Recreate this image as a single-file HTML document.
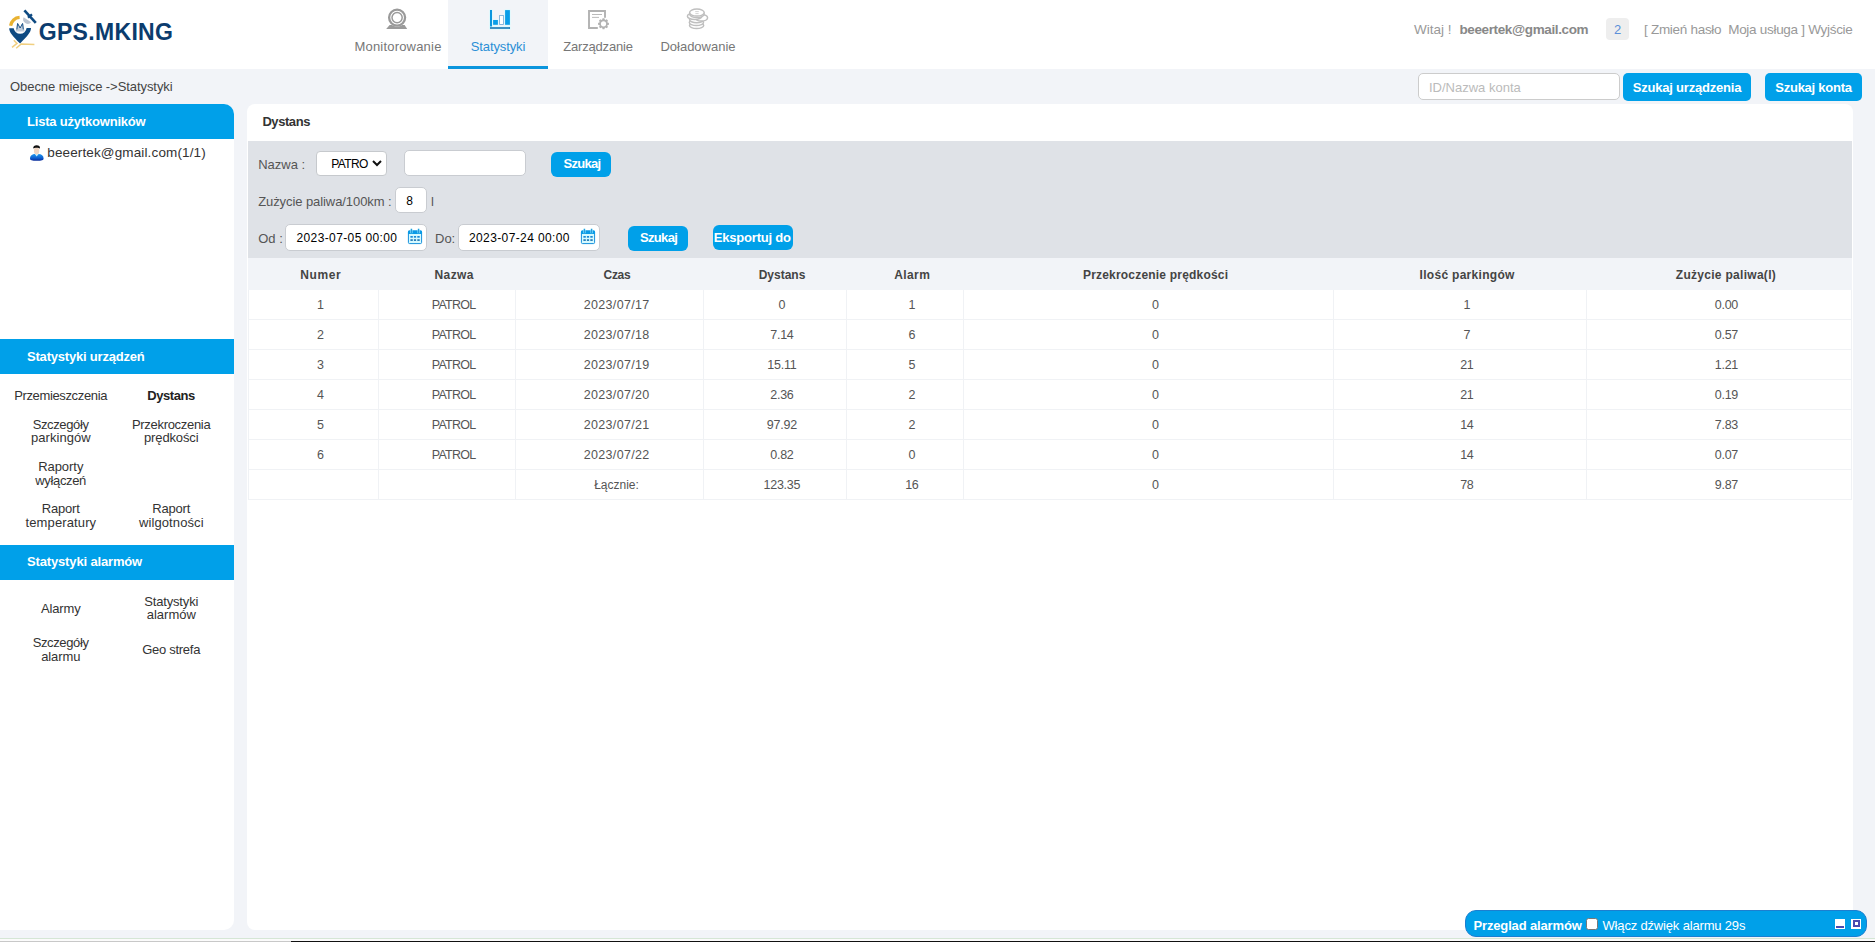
<!DOCTYPE html>
<html lang="pl">
<head>
<meta charset="utf-8">
<title>GPS.MKING - Statystyki</title>
<style>
*{box-sizing:border-box;margin:0;padding:0}
html,body{width:1875px;height:942px;overflow:hidden}
body{position:relative;background:#f2f4f8;font-family:"Liberation Sans",sans-serif;font-size:13px;color:#333}
.a{position:absolute;white-space:nowrap}
.c{position:absolute;white-space:nowrap;text-align:center}
/* header */
#hdr{position:absolute;left:0;top:0;width:1875px;height:69px;background:#fff}
#logotxt{left:38.7px;top:19.3px;font-size:23px;line-height:27px;font-weight:700;color:#0b3c6e;letter-spacing:0.33px}
.tab{position:absolute;top:0;width:100px;height:69px}
.tab.on{background:#f2f4f8;border-bottom:3px solid #0b95dd}
.tabl{top:39px;width:100px;font-size:13px;line-height:16px;color:#777}
.tab.on .tabl{color:#2b8fd6}
.hr{top:21.7px;line-height:16px;font-size:13.5px;color:#999}
/* sub bar */
#crumb{left:10px;top:79px;line-height:16px;color:#444;letter-spacing:-0.065px}
.btn{position:absolute;background:#00a0e9;color:#fff;font-weight:700;text-align:center;border-radius:5px;white-space:nowrap}
/* panels */
#side{position:absolute;left:0;top:104px;width:234px;height:826px;background:#fff;border-radius:0 10px 10px 0;overflow:hidden}
.sh{position:absolute;left:0;width:234px;height:35px;background:#00a0e9}
.sht{left:27px;top:9.7px;line-height:16px;color:#fff;font-weight:700;letter-spacing:-0.2px}
.mi{width:120px;line-height:14px;font-size:13px;color:#333}
#main{position:absolute;left:247px;top:104px;width:1606px;height:826px;background:#fff;border-radius:8px}
#filt{position:absolute;left:1px;top:37px;width:1604px;height:117px;background:#dfe2e7}
.fl{line-height:16px;color:#555}
.inp{position:absolute;background:#fff;border:1px solid #c9ccd1;border-radius:5px}
/* table */
#th{position:absolute;left:1px;top:154px;width:1604px;height:32px;background:#f2f4f8}
.hc{line-height:16px;font-size:12px;font-weight:700;color:#444}
.row{position:absolute;left:1px;width:1604px;height:30px;border-bottom:1px solid #f0f2f5}
.td{line-height:16px;font-size:12.5px;color:#555}
.vl{position:absolute;top:186px;width:1px;height:210px;background:#f0f2f5}
</style>
</head>
<body>
<div id="hdr"></div>
<div class="a" id="logotxt">GPS.MKING</div>


<div class="tab" style="left:348px"><div class="c tabl" id="t1" style="letter-spacing:0.2px">Monitorowanie</div></div>
<div class="tab on" style="left:448px"><div class="c tabl" id="t2" style="letter-spacing:-0.12px">Statystyki</div></div>
<div class="tab" style="left:548px"><div class="c tabl" id="t3" style="letter-spacing:-0.18px">Zarządzanie</div></div>
<div class="tab" style="left:648px"><div class="c tabl" id="t4">Doładowanie</div></div>

<!-- logo icon -->
<svg class="a" id="logo" style="left:6px;top:6px" width="34" height="46" viewBox="6 6 34 46">
  <path d="M10.6 25.8 A9.6 9.6 0 0 1 19.6 17.4" fill="none" stroke="#e9b232" stroke-width="3.2"/>
  <path d="M9.2 28.2 L13.7 28.2 A6.5 6.5 0 0 0 26.6 28.1 L31 28 C31 32.4 27.4 35.8 20.1 43.6 C12.6 35.8 9.2 32.4 9.2 28.2Z" fill="#0e4a82"/>
  <path d="M15.6 31.6 L17 24 L18.6 24 L20.1 27.6 L21.6 24 L23.2 24 L24.6 31.6Z" fill="#c3cedc"/>
  <path d="M16.9 29.4 L17.6 23.4 L20.1 28 L22.6 23.4 L23.3 29.4" fill="none" stroke="#0e4a82" stroke-width="0.9"/>
  <path d="M23.6 17.2 A4.6 4.6 0 0 0 31.2 22.2 Z" fill="#bcc5d2"/>
  <path d="M24.4 10.4 L35.8 22.8" fill="none" stroke="#0e4a82" stroke-width="2.6"/>
  <path d="M28 17.6 L32 14.4" fill="none" stroke="#0e4a82" stroke-width="2.4"/>
  <path d="M13.8 40.2 L17 43.4 L12 47.4 M16.2 48.2 L21.2 44 L34.4 44.4" fill="none" stroke="#f0cf80" stroke-width="1.5"/>
</svg>

<!-- monitor icon -->
<svg class="a" id="ic1" style="left:385px;top:7px" width="24" height="23" viewBox="385 7 24 23">
  <path d="M386.2 28.9 L389.6 24.9 L404.6 24.9 L407.2 28.9Z" fill="#9a9a9a"/>
  <circle cx="397.1" cy="17.5" r="9.2" fill="#fff"/>
  <circle cx="397.1" cy="17.6" r="8" fill="none" stroke="#9a9a9a" stroke-width="2.3"/>
  <circle cx="397.1" cy="17.6" r="5.1" fill="none" stroke="#9a9a9a" stroke-width="1.5"/>
</svg>

<!-- stats icon -->
<svg class="a" id="ic2" style="left:489px;top:9px" width="22" height="21" viewBox="489 9 22 21">
  <g stroke="#d6fbff" stroke-width="1.2" paint-order="stroke" stroke-linejoin="round"><path d="M490 10.1 H492 V27.1 H490Z" fill="#0c96de"/><path d="M490 27.1 H510 V28.9 H490Z" fill="#2b84bc"/>
  <rect x="493.1" y="20" width="4.8" height="4.8" fill="#0a9ee8"/>
  <rect x="499.6" y="15.6" width="3.8" height="8.7" fill="#fff" stroke="#2a80c0" stroke-width="1"/>
  <rect x="505.1" y="10.1" width="4.8" height="14.7" fill="#0a9ee8"/></g>
</svg>

<!-- manage icon -->
<svg class="a" id="ic3" style="left:587px;top:9px" width="24" height="22" viewBox="587 9 24 22">
  <path d="M605 17.7 V11 H589 V28 H597.8" fill="none" stroke="#b2b2b2" stroke-width="1.9"/>
  <path d="M592 14.5 H602 M592 17.4 H599" fill="none" stroke="#b2b2b2" stroke-width="0.9"/>
  <path d="M607.32 22.31 L608.93 22.90 L608.93 24.70 L607.32 25.29 L607.26 25.44 L607.97 27.00 L606.70 28.27 L605.14 27.56 L604.99 27.62 L604.40 29.23 L602.60 29.23 L602.01 27.62 L601.86 27.56 L600.30 28.27 L599.03 27.00 L599.74 25.44 L599.68 25.29 L598.07 24.70 L598.07 22.90 L599.68 22.31 L599.74 22.16 L599.03 20.60 L600.30 19.33 L601.86 20.04 L602.01 19.98 L602.60 18.37 L604.40 18.37 L604.99 19.98 L605.14 20.04 L606.70 19.33 L607.97 20.60 L607.26 22.16Z" fill="#b2b2b2"/>
  <circle cx="603.5" cy="23.8" r="2.6" fill="#fff"/>
</svg>

<!-- coins icon -->
<svg class="a" id="ic4" style="left:686px;top:8px" width="24" height="22" viewBox="686 8 24 22">
  <g fill="#fff" stroke="#bfbfbf" stroke-width="1.5">
    <ellipse cx="696.6" cy="25.4" rx="7.1" ry="3.1"/>
    <ellipse cx="696.4" cy="22.4" rx="7.1" ry="3.1"/>
    <ellipse cx="696.6" cy="19.6" rx="7.1" ry="3.1"/>
    <ellipse cx="701.4" cy="17.8" rx="6.2" ry="3.3"/>
    <ellipse cx="694.6" cy="16.2" rx="7.2" ry="3.3"/>
    <ellipse cx="696.9" cy="14.1" rx="7.3" ry="3.5"/>
    <ellipse cx="696.9" cy="12.6" rx="7.3" ry="3.5"/>
  </g>
  <path d="M695.2 11.6 H698.8 M695.4 13.6 H698.6" stroke="#cfcfcf" stroke-width="0.9" fill="none"/>
</svg>


<div class="a hr" id="h1" style="left:1414px">Witaj !</div>
<div class="a hr" id="h2" style="left:1459.5px;font-weight:700;color:#888;letter-spacing:-0.38px">beeertek@gmail.com</div>
<div class="c" id="badge" style="left:1606px;top:18px;width:23px;height:22px;line-height:23.5px;background:#eee;border-radius:4px;color:#5b8fd9;font-size:13px">2</div>
<div class="a hr" id="h3" style="left:1644px;letter-spacing:-0.29px">[ Zmień hasło&nbsp; Moja usługa ] Wyjście</div>

<div class="a" id="crumb">Obecne miejsce -&gt;Statystyki</div>
<div class="inp" id="sinp" style="left:1418px;top:73px;width:202px;height:27px;border-color:#ccc"></div>
<div class="a" id="sph" style="left:1429px;top:79.8px;line-height:16px;color:#bbb">ID/Nazwa konta</div>
<div class="btn" id="b1" style="left:1623px;top:73px;width:128px;height:28px;line-height:29.4px;letter-spacing:-0.2px">Szukaj urządzenia</div>
<div class="btn" id="b2" style="left:1765px;top:73px;width:97px;height:28px;line-height:29.4px;letter-spacing:-0.25px">Szukaj konta</div>

<!-- sidebar -->
<div id="side">
  <div class="sh" style="top:0"></div>
  <div class="a sht" id="s1" style="top:9.7px">Lista użytkowników</div>
  <svg class="a" id="uic" style="left:29px;top:40px" width="16" height="18" viewBox="29 144 16 18">
    <defs><linearGradient id="ub" x1="0" y1="0" x2="0" y2="1"><stop offset="0" stop-color="#2399ee"/><stop offset="0.6" stop-color="#0d5fd0"/><stop offset="1" stop-color="#0a2a98"/></linearGradient></defs>
    <path d="M30 158.4 C30 155.4 32.4 153.9 35 153.9 L38.6 153.9 C41.4 153.9 43.6 155.4 43.6 158.4 C43.6 160.2 41.6 160.8 36.8 160.8 C32 160.8 30 160.2 30 158.4Z" fill="url(#ub)"/>
    <path d="M34.6 153.8 L36.7 156.4 L38.8 153.8Z" fill="#c8f2ff"/>
    <ellipse cx="36.6" cy="150.8" rx="2.7" ry="3.6" fill="#efd5c2"/>
    <path d="M33.2 148.6 C33 146.2 34.6 145.3 36.6 145.3 C38.8 145.3 40.3 146.2 40 148.7 C39 147.6 34.4 147.6 33.2 148.6Z" fill="#111"/>
  </svg>
  <div class="a" id="usr" style="left:47.3px;top:40.6px;line-height:16px;color:#333;font-size:13.5px;letter-spacing:0.13px">beeertek@gmail.com(1/1)</div>

  <div class="sh" style="top:235px"></div>
  <div class="a sht" id="s2" style="top:244.7px">Statystyki urządzeń</div>

  <div class="sh" style="top:441px"></div>
  <div class="a sht" id="s3" style="top:449.7px;letter-spacing:-0.15px">Statystyki alarmów</div>
  <div class="c mi" id="m0" style="left:0.62px;top:285.09px;letter-spacing:-0.36px">Przemieszczenia</div>
  <div class="c mi" id="m1" style="left:111.09px;top:285.09px;letter-spacing:-0.43px;font-weight:700;color:#222">Dystans</div>
  <div class="c mi" id="m2" style="left:0.61px;top:313.99px;letter-spacing:-0.37px">Szczegóły</div>
  <div class="c mi" id="m3" style="left:0.82px;top:326.79px;letter-spacing:0.05px">parkingów</div>
  <div class="c mi" id="m4" style="left:111.15px;top:313.99px;letter-spacing:-0.31px">Przekroczenia</div>
  <div class="c mi" id="m5" style="left:111.24px;top:326.79px;letter-spacing:-0.13px">prędkości</div>
  <div class="c mi" id="m6" style="left:0.77px;top:355.79px;letter-spacing:-0.05px">Raporty</div>
  <div class="c mi" id="m7" style="left:0.62px;top:369.59px;letter-spacing:-0.36px">wyłączeń</div>
  <div class="c mi" id="m8" style="left:0.71px;top:397.99px;letter-spacing:-0.17px">Raport</div>
  <div class="c mi" id="m9" style="left:0.86px;top:411.79px;letter-spacing:0.12px">temperatury</div>
  <div class="c mi" id="m10" style="left:111.22px;top:397.99px;letter-spacing:-0.17px">Raport</div>
  <div class="c mi" id="m11" style="left:111.35px;top:411.79px;letter-spacing:0.09px">wilgotności</div>
  <div class="c mi" id="m12" style="left:0.73px;top:498.09px;letter-spacing:-0.13px">Alarmy</div>
  <div class="c mi" id="m13" style="left:111.22px;top:490.69px;letter-spacing:-0.17px">Statystyki</div>
  <div class="c mi" id="m14" style="left:111.29px;top:503.99px;letter-spacing:-0.02px">alarmów</div>
  <div class="c mi" id="m15" style="left:0.61px;top:532.39px;letter-spacing:-0.37px">Szczegóły</div>
  <div class="c mi" id="m16" style="left:0.75px;top:546.19px;letter-spacing:-0.1px">alarmu</div>
  <div class="c mi" id="m17" style="left:111.16px;top:539.49px;letter-spacing:-0.28px">Geo strefa</div>
</div>

<!-- main -->
<div id="main">
  <div class="a" id="ttl" style="left:15.4px;top:9.8px;line-height:16px;font-weight:700;color:#333;letter-spacing:-0.43px">Dystans</div>
  <div id="filt"></div>
  <div id="th"></div>

  <div class="a fl" id="f1" style="left:11.2px;top:52.9px">Nazwa :</div>
  <div class="inp" id="sel" style="left:69px;top:47px;width:70.5px;height:25px;border-radius:4px;border-color:#c6c9cd"></div>
  <div class="a" id="selt" style="left:84.2px;top:52.1px;line-height:16px;color:#000;font-size:12px;letter-spacing:-0.6px">PATRO</div>
  <svg class="a" id="chev" style="left:125px;top:56px" width="10" height="7" viewBox="0 0 10 7"><path d="M1 1 L5 5 L9 1" fill="none" stroke="#111" stroke-width="2"/></svg>
  <div class="inp" id="tin" style="left:157px;top:46px;width:122px;height:26px"></div>
  <div class="btn" id="fb1" style="left:304px;top:48px;width:60px;height:25px;line-height:24px;border-radius:6px;letter-spacing:-0.7px;padding-left:1.8px">Szukaj</div>

  <div class="a fl" id="f2" style="left:11.2px;top:90px;letter-spacing:-0.08px">Zużycie paliwa/100km :</div>
  <div class="inp" id="in8" style="left:148px;top:83px;width:32px;height:26px"></div>
  <div class="c" id="t8" style="left:148px;top:88.8px;width:29px;line-height:16px;color:#000;font-size:12px">8</div>
  <div class="a fl" id="fl" style="left:184px;top:89.8px">l</div>

  <div class="a fl" id="f3" style="left:11.2px;top:126.8px">Od :</div>
  <div class="inp" id="d1" style="left:38px;top:120px;width:142px;height:27px"></div>
  <div class="a" id="d1t" style="left:49.5px;top:125.7px;line-height:16px;color:#000;font-size:12px;letter-spacing:0.38px">2023-07-05 00:00</div>
  <svg class="a" id="cal1" style="left:160px;top:124px" width="16" height="17" viewBox="0 0 16 17">
    <rect x="1.4" y="3" width="13.2" height="12.6" rx="1.2" fill="#d6faff" stroke="#1590dc" stroke-width="1"/>
    <path d="M1 3.4 C1 2.6 1.6 2.4 2.4 2.4 H13.6 C14.4 2.4 15 2.6 15 3.4 V6 H1Z" fill="#0a9be6"/>
    <path d="M4.4 0.8 V5.2 M11.6 0.8 V5.2" stroke="#8feaff" stroke-width="2.2" fill="none"/>
    <path d="M4.4 0.8 V5.2 M11.6 0.8 V5.2" stroke="#1487d4" stroke-width="0.9" fill="none"/>
    <g fill="#1a8ad6"><rect x="3.4" y="8" width="2.4" height="1.7"/><rect x="6.9" y="8" width="2.2" height="1.7"/><rect x="10.3" y="8" width="2.4" height="1.7"/></g>
    <g fill="#2c7fb8"><rect x="3.4" y="11.2" width="2.4" height="1.8"/><rect x="6.9" y="11.2" width="2.2" height="1.8"/><rect x="10.3" y="11.2" width="2.4" height="1.8"/></g>
  </svg>
  <div class="a fl" id="f4" style="left:188px;top:126.8px">Do:</div>
  <div class="inp" id="d2" style="left:211px;top:120px;width:142px;height:27px"></div>
  <div class="a" id="d2t" style="left:222px;top:125.7px;line-height:16px;color:#000;font-size:12px;letter-spacing:0.38px">2023-07-24 00:00</div>
  <svg class="a" id="cal2" style="left:333px;top:124px" width="16" height="17" viewBox="0 0 16 17">
    <rect x="1.4" y="3" width="13.2" height="12.6" rx="1.2" fill="#d6faff" stroke="#1590dc" stroke-width="1"/>
    <path d="M1 3.4 C1 2.6 1.6 2.4 2.4 2.4 H13.6 C14.4 2.4 15 2.6 15 3.4 V6 H1Z" fill="#0a9be6"/>
    <path d="M4.4 0.8 V5.2 M11.6 0.8 V5.2" stroke="#8feaff" stroke-width="2.2" fill="none"/>
    <path d="M4.4 0.8 V5.2 M11.6 0.8 V5.2" stroke="#1487d4" stroke-width="0.9" fill="none"/>
    <g fill="#1a8ad6"><rect x="3.4" y="8" width="2.4" height="1.7"/><rect x="6.9" y="8" width="2.2" height="1.7"/><rect x="10.3" y="8" width="2.4" height="1.7"/></g>
    <g fill="#2c7fb8"><rect x="3.4" y="11.2" width="2.4" height="1.8"/><rect x="6.9" y="11.2" width="2.2" height="1.8"/><rect x="10.3" y="11.2" width="2.4" height="1.8"/></g>
  </svg>
  <div class="btn" id="fb2" style="left:381px;top:122px;width:60px;height:25px;line-height:24px;border-radius:6px;letter-spacing:-0.7px;padding-left:1.2px">Szukaj</div>
  <div class="btn" id="fb3" style="left:466px;top:121px;width:80px;height:25px;line-height:25px;border-radius:6px;letter-spacing:-0.2px;padding-right:1.4px">Eksportuj do</div>
<!--TABLE-->
  <div class="c hc" id="hc0" style="left:16.32px;top:162.9px;width:115px;letter-spacing:0.64px">Numer</div>
  <div class="c hc" id="hc1" style="left:146.21px;top:162.9px;width:122px;letter-spacing:0.42px">Nazwa</div>
  <div class="c hc" id="hc2" style="left:283.43px;top:162.9px;width:173px;letter-spacing:-0.35px">Czas</div>
  <div class="c hc" id="hc3" style="left:471.00px;top:162.9px;width:128px;letter-spacing:0.0px">Dystans</div>
  <div class="c hc" id="hc4" style="left:614.21px;top:162.9px;width:102px;letter-spacing:0.42px">Alarm</div>
  <div class="c hc" id="hc5" style="left:731.10px;top:162.9px;width:355px;letter-spacing:0.2px">Przekroczenie prędkości</div>
  <div class="c hc" id="hc6" style="left:1101.14px;top:162.9px;width:238px;letter-spacing:0.29px">Ilość parkingów</div>
  <div class="c hc" id="hc7" style="left:1353.44px;top:162.9px;width:251px;letter-spacing:0.29px">Zużycie paliwa(l)</div>
  <div class="row" style="top:186px"></div>
  <div class="c td" id="c0_0" style="left:16.00px;top:193.3px;width:115px;letter-spacing:0px">1</div>
  <div class="c td" id="c0_1" style="left:145.62px;top:193.3px;width:122px;letter-spacing:-0.77px">PATROL</div>
  <div class="c td" id="c0_2" style="left:283.17px;top:193.3px;width:173px;letter-spacing:0.33px">2023/07/17</div>
  <div class="c td" id="c0_3" style="left:471.00px;top:193.3px;width:128px;letter-spacing:0px">0</div>
  <div class="c td" id="c0_4" style="left:614.00px;top:193.3px;width:102px;letter-spacing:0px">1</div>
  <div class="c td" id="c0_5" style="left:731.00px;top:193.3px;width:355px;letter-spacing:0px">0</div>
  <div class="c td" id="c0_6" style="left:1101.00px;top:193.3px;width:238px;letter-spacing:0px">1</div>
  <div class="c td" id="c0_7" style="left:1353.88px;top:193.3px;width:251px;letter-spacing:-0.25px">0.00</div>
  <div class="row" style="top:216px"></div>
  <div class="c td" id="c1_0" style="left:16.00px;top:223.3px;width:115px;letter-spacing:0px">2</div>
  <div class="c td" id="c1_1" style="left:145.62px;top:223.3px;width:122px;letter-spacing:-0.77px">PATROL</div>
  <div class="c td" id="c1_2" style="left:283.17px;top:223.3px;width:173px;letter-spacing:0.33px">2023/07/18</div>
  <div class="c td" id="c1_3" style="left:470.88px;top:223.3px;width:128px;letter-spacing:-0.25px">7.14</div>
  <div class="c td" id="c1_4" style="left:614.00px;top:223.3px;width:102px;letter-spacing:0px">6</div>
  <div class="c td" id="c1_5" style="left:731.00px;top:223.3px;width:355px;letter-spacing:0px">0</div>
  <div class="c td" id="c1_6" style="left:1101.00px;top:223.3px;width:238px;letter-spacing:0px">7</div>
  <div class="c td" id="c1_7" style="left:1353.88px;top:223.3px;width:251px;letter-spacing:-0.25px">0.57</div>
  <div class="row" style="top:246px"></div>
  <div class="c td" id="c2_0" style="left:16.00px;top:253.3px;width:115px;letter-spacing:0px">3</div>
  <div class="c td" id="c2_1" style="left:145.62px;top:253.3px;width:122px;letter-spacing:-0.77px">PATROL</div>
  <div class="c td" id="c2_2" style="left:283.17px;top:253.3px;width:173px;letter-spacing:0.33px">2023/07/19</div>
  <div class="c td" id="c2_3" style="left:470.88px;top:253.3px;width:128px;letter-spacing:-0.25px">15.11</div>
  <div class="c td" id="c2_4" style="left:614.00px;top:253.3px;width:102px;letter-spacing:0px">5</div>
  <div class="c td" id="c2_5" style="left:731.00px;top:253.3px;width:355px;letter-spacing:0px">0</div>
  <div class="c td" id="c2_6" style="left:1100.88px;top:253.3px;width:238px;letter-spacing:-0.25px">21</div>
  <div class="c td" id="c2_7" style="left:1353.88px;top:253.3px;width:251px;letter-spacing:-0.25px">1.21</div>
  <div class="row" style="top:276px"></div>
  <div class="c td" id="c3_0" style="left:16.00px;top:283.3px;width:115px;letter-spacing:0px">4</div>
  <div class="c td" id="c3_1" style="left:145.62px;top:283.3px;width:122px;letter-spacing:-0.77px">PATROL</div>
  <div class="c td" id="c3_2" style="left:283.17px;top:283.3px;width:173px;letter-spacing:0.33px">2023/07/20</div>
  <div class="c td" id="c3_3" style="left:470.88px;top:283.3px;width:128px;letter-spacing:-0.25px">2.36</div>
  <div class="c td" id="c3_4" style="left:614.00px;top:283.3px;width:102px;letter-spacing:0px">2</div>
  <div class="c td" id="c3_5" style="left:731.00px;top:283.3px;width:355px;letter-spacing:0px">0</div>
  <div class="c td" id="c3_6" style="left:1100.88px;top:283.3px;width:238px;letter-spacing:-0.25px">21</div>
  <div class="c td" id="c3_7" style="left:1353.88px;top:283.3px;width:251px;letter-spacing:-0.25px">0.19</div>
  <div class="row" style="top:306px"></div>
  <div class="c td" id="c4_0" style="left:16.00px;top:313.3px;width:115px;letter-spacing:0px">5</div>
  <div class="c td" id="c4_1" style="left:145.62px;top:313.3px;width:122px;letter-spacing:-0.77px">PATROL</div>
  <div class="c td" id="c4_2" style="left:283.17px;top:313.3px;width:173px;letter-spacing:0.33px">2023/07/21</div>
  <div class="c td" id="c4_3" style="left:470.88px;top:313.3px;width:128px;letter-spacing:-0.25px">97.92</div>
  <div class="c td" id="c4_4" style="left:614.00px;top:313.3px;width:102px;letter-spacing:0px">2</div>
  <div class="c td" id="c4_5" style="left:731.00px;top:313.3px;width:355px;letter-spacing:0px">0</div>
  <div class="c td" id="c4_6" style="left:1100.88px;top:313.3px;width:238px;letter-spacing:-0.25px">14</div>
  <div class="c td" id="c4_7" style="left:1353.88px;top:313.3px;width:251px;letter-spacing:-0.25px">7.83</div>
  <div class="row" style="top:336px"></div>
  <div class="c td" id="c5_0" style="left:16.00px;top:343.3px;width:115px;letter-spacing:0px">6</div>
  <div class="c td" id="c5_1" style="left:145.62px;top:343.3px;width:122px;letter-spacing:-0.77px">PATROL</div>
  <div class="c td" id="c5_2" style="left:283.17px;top:343.3px;width:173px;letter-spacing:0.33px">2023/07/22</div>
  <div class="c td" id="c5_3" style="left:470.88px;top:343.3px;width:128px;letter-spacing:-0.25px">0.82</div>
  <div class="c td" id="c5_4" style="left:614.00px;top:343.3px;width:102px;letter-spacing:0px">0</div>
  <div class="c td" id="c5_5" style="left:731.00px;top:343.3px;width:355px;letter-spacing:0px">0</div>
  <div class="c td" id="c5_6" style="left:1100.88px;top:343.3px;width:238px;letter-spacing:-0.25px">14</div>
  <div class="c td" id="c5_7" style="left:1353.88px;top:343.3px;width:251px;letter-spacing:-0.25px">0.07</div>
  <div class="row" style="top:366px"></div>
  <div class="c td" id="c6_2" style="left:283.00px;top:373.3px;width:173px;letter-spacing:0px;font-size:12px">Łącznie:</div>
  <div class="c td" id="c6_3" style="left:470.88px;top:373.3px;width:128px;letter-spacing:-0.25px">123.35</div>
  <div class="c td" id="c6_4" style="left:613.88px;top:373.3px;width:102px;letter-spacing:-0.25px">16</div>
  <div class="c td" id="c6_5" style="left:731.00px;top:373.3px;width:355px;letter-spacing:0px">0</div>
  <div class="c td" id="c6_6" style="left:1100.88px;top:373.3px;width:238px;letter-spacing:-0.25px">78</div>
  <div class="c td" id="c6_7" style="left:1353.88px;top:373.3px;width:251px;letter-spacing:-0.25px">9.87</div>
  <div class="vl" style="left:131px"></div>
  <div class="vl" style="left:268px"></div>
  <div class="vl" style="left:456px"></div>
  <div class="vl" style="left:599px"></div>
  <div class="vl" style="left:716px"></div>
  <div class="vl" style="left:1086px"></div>
  <div class="vl" style="left:1339px"></div>
  <div class="vl" style="left:1px"></div>
  <div class="vl" style="left:1604px"></div>
<!--/TABLE-->
</div>


<!-- alarm bar -->
<div id="abar" style="position:absolute;left:1465px;top:910px;width:402px;height:27px;background:#00a0e9;border:1px solid #1c7fd0;border-radius:11px"></div>
<div class="a" id="ab1" style="left:1473.5px;top:917.7px;line-height:16px;color:#fff;font-weight:700;letter-spacing:-0.15px">Przeglad alarmów</div>
<div id="acb" style="position:absolute;left:1585.5px;top:917.5px;width:12px;height:12px;background:#fff;border:1px solid #777;border-radius:2.5px"></div>
<div class="a" id="ab2" style="left:1602.5px;top:917.7px;line-height:16px;color:#fff;letter-spacing:-0.17px">Włącz dźwięk alarmu 29s</div>
<div id="amin" style="position:absolute;left:1835px;top:919px;width:10px;height:10px;background:#fff"><div style="position:absolute;left:1px;top:6.5px;width:8px;height:2px;background:#4a4ab0"></div></div>
<div id="amax" style="position:absolute;left:1851px;top:919px;width:10px;height:10px;background:#fff"><div style="position:absolute;left:2px;top:1px;width:7px;height:7px;border:2px solid #4a4ab0"></div></div>

<!-- bottom strip -->
<div style="position:absolute;left:0;top:938px;width:1875px;height:1px;background:#d5e6d5"></div>
<div style="position:absolute;left:0;top:939px;width:1875px;height:2px;background:#fbfbfb"></div>
<div style="position:absolute;left:0;top:941px;width:291px;height:1px;background:#c8c8c8"></div>
<div style="position:absolute;left:291px;top:941px;width:1584px;height:1px;background:#111"></div>

</body>
</html>
